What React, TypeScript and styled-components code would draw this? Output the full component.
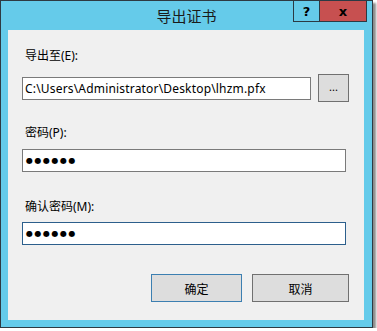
import styled, { createGlobalStyle } from "styled-components";

const GlobalStyle = createGlobalStyle`
  html, body {
    margin: 0;
    padding: 0;
    background: #ffffff;
  }
  body {
    font-family: "Noto Sans", "Noto Sans CJK SC", sans-serif;
  }
`;

interface FieldProps {
  label: string;
  top: number;
  gap: number;
  children: React.ReactNode;
}

const Field = ({ label, top, gap, children }: FieldProps) => (
  <FieldBlock $top={top}>
    <Label $gap={gap}>{label}</Label>
    {children}
  </FieldBlock>
);

const App = () => {
  return (
    <>
      <GlobalStyle />
      <Window>
        <TitleBar>
          <Title>导出证书</Title>
          <Caption>
            <CaptionButton $w={27}>?</CaptionButton>
            <CaptionButton $w={48} $close>
              x
            </CaptionButton>
          </Caption>
        </TitleBar>
        <Client>
          <Field label="导出至(E):" top={0} gap={10}>
            <PathRow>
              <TextBox $path>C:\Users\Administrator\Desktop\lhzm.pfx</TextBox>
              <BrowseButton>...</BrowseButton>
            </PathRow>
          </Field>
          <Field label="密码(P):" top={23} gap={8}>
            <TextBox $wide>
              <Dots>●●●●●●</Dots>
            </TextBox>
          </Field>
          <Field label="确认密码(M):" top={27} gap={7}>
            <TextBox $wide $focused>
              <Dots>●●●●●●</Dots>
            </TextBox>
          </Field>
          <Footer>
            <DialogButton $w={91} $default>
              确定
            </DialogButton>
            <DialogButton $w={97}>取消</DialogButton>
          </Footer>
        </Client>
      </Window>
    </>
  );
};

const Window = styled.div`
  width: 371px;
  height: 326px;
  border: 1px solid #2e3a42;
  background: #65cbea;
  display: flex;
  flex-direction: column;
  box-shadow: 3px 3px 2px rgba(0, 0, 0, 0.45);
`;

const TitleBar = styled.div`
  height: 29px;
  display: grid;
  grid-template-areas: "stack";
`;

const Title = styled.div`
  grid-area: stack;
  justify-self: center;
  align-self: center;
  font-family: "Noto Sans CJK SC", sans-serif;
  font-size: 15px;
  color: #1a1a1a;
`;

const Caption = styled.div`
  grid-area: stack;
  justify-self: end;
  align-self: start;
  display: flex;
  margin-top: -1px;
  margin-right: 5px;
`;

const CaptionButton = styled.div<{ $w: number; $close?: boolean }>`
  width: ${(p) => p.$w - 2}px;
  height: 20px;
  border: 1px solid #2b3a44;
  margin-left: ${(p) => (p.$close ? "-1px" : "0")};
  background: ${(p) => (p.$close ? "#c75050" : "#65cbea")};
  display: flex;
  align-items: center;
  justify-content: center;
  font-family: "DejaVu Sans", sans-serif;
  font-weight: bold;
  font-size: 13px;
  color: #000;
  line-height: 1;
`;

const Client = styled.div`
  flex: 1;
  margin: 0 8px 7px 7px;
  background: #f0f0f0;
  padding: 18px 15px 0 14px;
  display: flex;
  flex-direction: column;
`;

const FieldBlock = styled.div<{ $top: number }>`
  display: flex;
  flex-direction: column;
  margin-top: ${(p) => p.$top}px;
`;

const Label = styled.div<{ $gap: number }>`
  padding-left: 3px;
  font-size: 12px;
  line-height: 16px;
  height: 16px;
  color: #000;
  margin-bottom: ${(p) => p.$gap}px;
`;

const PathRow = styled.div`
  display: flex;
  align-items: center;
  gap: 7px;
`;

const TextBox = styled.div<{ $wide?: boolean; $focused?: boolean; $path?: boolean }>`
  box-sizing: border-box;
  width: ${(p) => (p.$wide ? "324px" : "289px")};
  height: 23px;
  border: 1px solid ${(p) => (p.$focused ? "#2c5f8c" : "#7a7a7a")};
  background: #fff;
  padding-left: 2px;
  display: flex;
  align-items: center;
  font-size: 12px;
  letter-spacing: ${(p) => (p.$path ? "0.18px" : "0")};
  color: #000;
  white-space: nowrap;
  overflow: hidden;
`;

const Dots = styled.span`
  font-family: "DejaVu Sans", sans-serif;
  font-size: 8px;
  letter-spacing: 1.5px;
  padding-left: 1px;
`;

const BrowseButton = styled.div`
  box-sizing: border-box;
  width: 31px;
  height: 28px;
  border: 1px solid #707070;
  background: #dddddd;
  display: flex;
  align-items: center;
  justify-content: center;
  font-size: 11px;
  padding-bottom: 3px;
`;

const Footer = styled.div`
  display: flex;
  justify-content: flex-end;
  gap: 10px;
  margin-top: 29px;
`;

const DialogButton = styled.div<{ $w: number; $default?: boolean }>`
  box-sizing: border-box;
  width: ${(p) => p.$w}px;
  height: 28px;
  border: 1px solid ${(p) => (p.$default ? "#3c7fb1" : "#707070")};
  background: #dddddd;
  display: flex;
  align-items: center;
  justify-content: center;
  font-family: "Noto Sans CJK SC", sans-serif;
  font-size: 12px;
  color: #000;
`;

export default App;
